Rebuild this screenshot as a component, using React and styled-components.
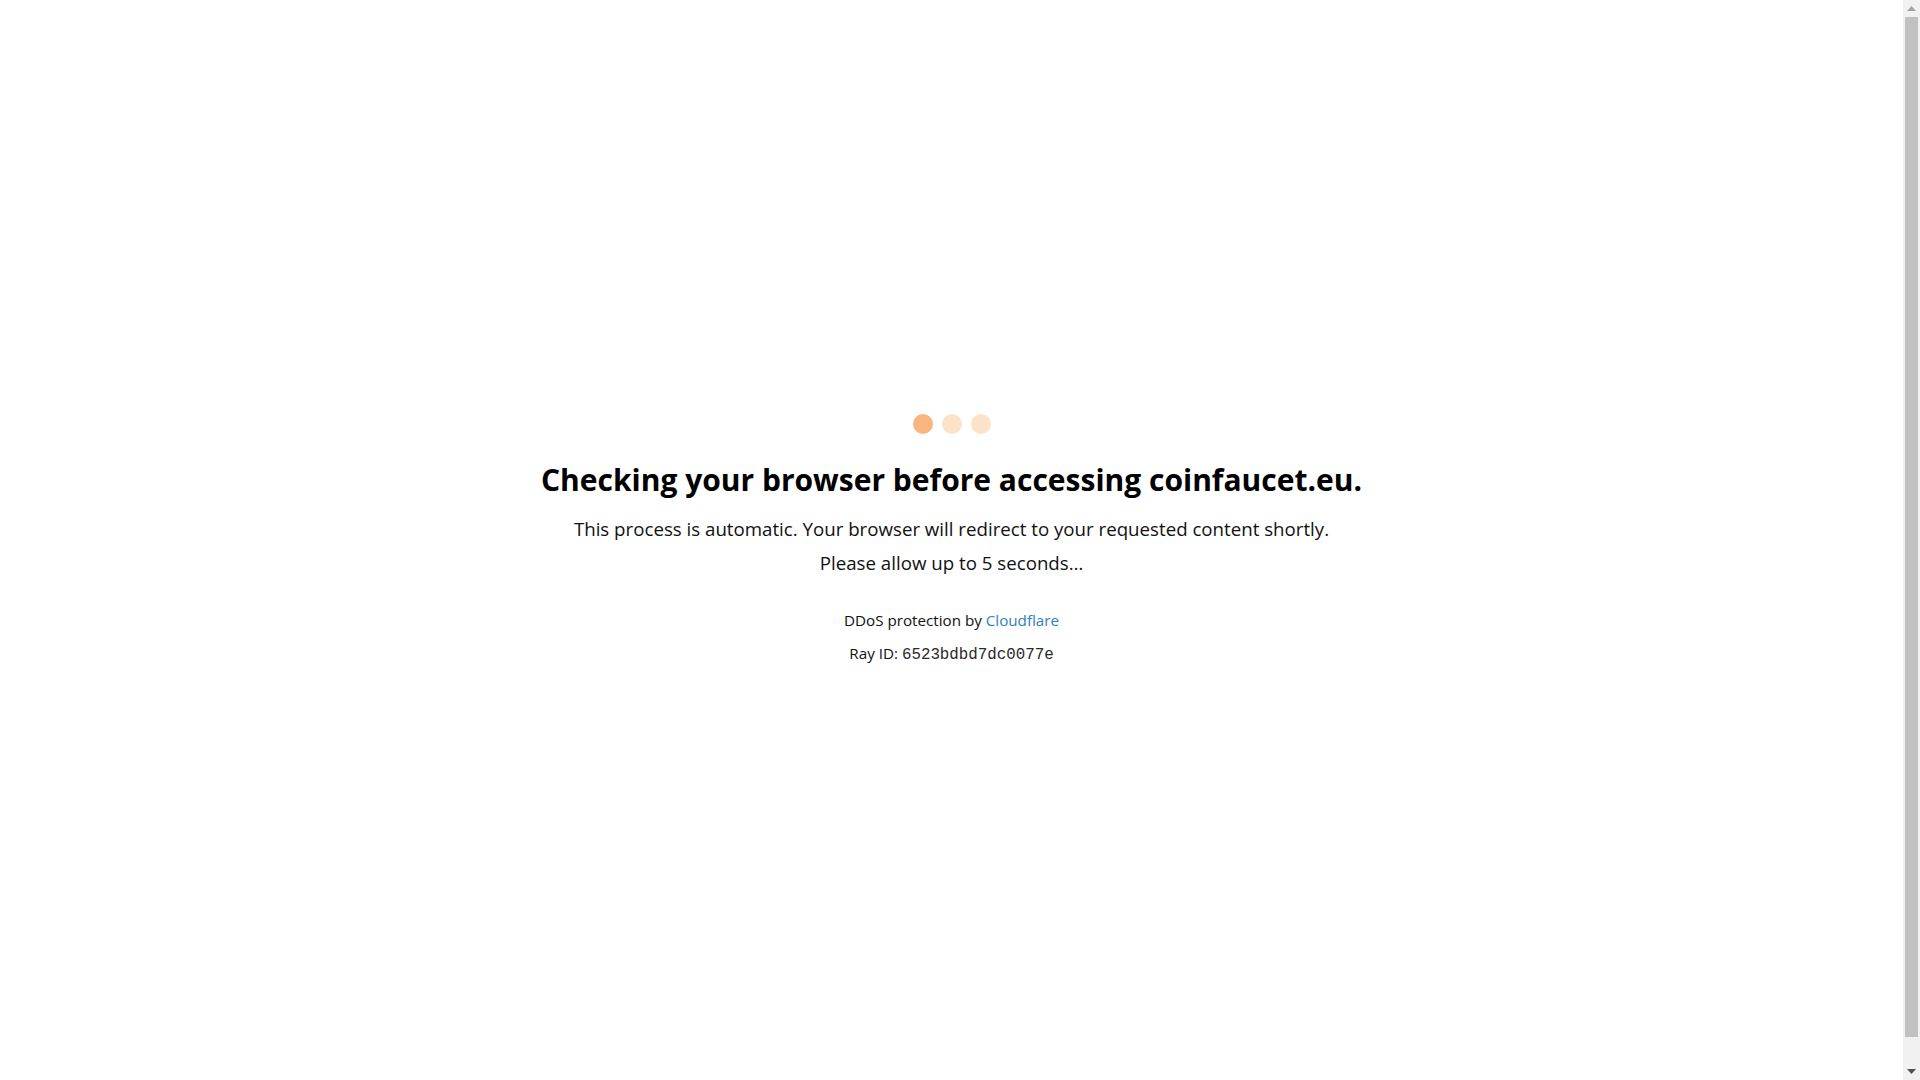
import React from "react";
import styled, { createGlobalStyle } from "styled-components";

const GlobalStyle = createGlobalStyle`
  html, body { margin: 0; padding: 0; background: #ffffff; overflow: hidden; }
  body {
    font-family: "Open Sans", "Noto Sans", sans-serif;
    color: #111111;
  }
`;

const Window = styled.div`
  display: flex;
  height: 100vh;
`;

const Page = styled.main`
  flex: 1;
  box-sizing: border-box;
  padding-top: 414px;
  display: flex;
  flex-direction: column;
  align-items: center;
  text-align: center;
`;

const Dots = styled.div`
  display: flex;
  gap: 9px;
  height: 20px;
`;

const Dot = styled.span`
  width: 20px;
  height: 20px;
  border-radius: 50%;
  background: ${(p) => (p.$active ? "#f9b57d" : "#fde2ca")};
`;

const Heading = styled.h1`
  margin: 25px 0 0;
  font-size: 30px;
  font-weight: 700;
  line-height: 41px;
  color: #000000;
`;

const Message = styled.div`
  margin-top: 12px;
`;

const Text = styled.p`
  margin: 0;
  font-size: 18.7px;
  line-height: 34px;
  color: #111111;
`;

const Footer = styled.div`
  margin-top: 25px;
  font-size: 15.2px;
  line-height: 31px;
  color: #111111;
`;

const Line = styled.div`
  margin-top: ${(p) => p.$offset || 0}px;
`;

const Link = styled.a`
  color: #2f7fc1;
  text-decoration: none;
`;

const Code = styled.code`
  font-family: "Liberation Mono", "Courier New", monospace;
  font-size: 15.8px;
  color: #2a2a2a;
`;

const Scrollbar = styled.div`
  width: 17px;
  flex: none;
  background: #f1f1f1;
  display: flex;
  flex-direction: column;
  align-items: center;
`;

const Arrow = styled.div`
  height: 17px;
  width: 17px;
  display: flex;
  align-items: center;
  justify-content: center;
`;

const Thumb = styled.div`
  flex: 1;
  width: 13px;
  margin-bottom: 26px;
  background: #c1c1c1;
`;

function Triangle({ up, color }) {
  return (
    <svg width="9" height="5" viewBox="0 0 9 5">
      <polygon points={up ? "0,5 9,5 4.5,0" : "0,0 9,0 4.5,5"} fill={color} />
    </svg>
  );
}

export default function App() {
  return (
    <>
      <GlobalStyle />
      <Window>
        <Page>
          <Dots>
            <Dot $active />
            <Dot />
            <Dot />
          </Dots>
          <Heading>Checking your browser before accessing coinfaucet.eu.</Heading>
          <Message>
            <Text>This process is automatic. Your browser will redirect to your requested content shortly.</Text>
            <Text>Please allow up to 5 seconds…</Text>
          </Message>
          <Footer>
            <Line>
              DDoS protection by <Link href="#">Cloudflare</Link>
            </Line>
            <Line $offset={2}>
              Ray ID: <Code>6523bdbd7dc0077e</Code>
            </Line>
          </Footer>
        </Page>
        <Scrollbar>
          <Arrow>
            <Triangle up color="#a3a3a3" />
          </Arrow>
          <Thumb />
          <Arrow>
            <Triangle color="#505050" />
          </Arrow>
        </Scrollbar>
      </Window>
    </>
  );
}
